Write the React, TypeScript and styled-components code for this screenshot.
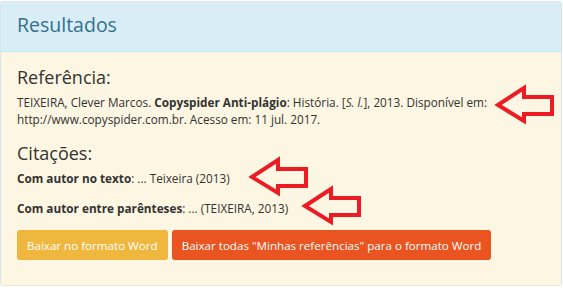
import React from "react";
import styled, { createGlobalStyle } from "styled-components";

const GlobalStyle = createGlobalStyle`
  html, body { margin: 0; padding: 0; background: #ffffff; }
  body {
    font-family: "Open Sans", "Noto Sans", sans-serif;
    color: #333333;
    -webkit-font-smoothing: antialiased;
  }
  * { box-sizing: border-box; }
`;

const Panel = styled.section`
  position: relative;
  margin-top: 1px;
  width: 562px;
  border: 1px solid #d8e6ea;
  border-bottom-color: #f4e4c3;
  border-radius: 3px;
  overflow: hidden;
`;

const Heading = styled.header`
  background: #d9edf7;
  border-bottom: 1px solid #bce8f1;
  color: #31708f;
  padding: 11px 16px 15px;
  font-size: 19.5px;
  line-height: 23px;
  font-weight: 400;
`;

const Body = styled.div`
  background: #fdf6e2;
  padding: 15px 16px 25px;
`;

const SectionTitle = styled.h4`
  margin: 0 0 7px;
  font-size: 18px;
  line-height: 20px;
  font-weight: 400;
  color: #333333;
`;

const RefText = styled.p`
  margin: 0 0 15px;
  font-size: 11.75px;
  line-height: 17px;
  color: #333333;
`;

const CiteLine = styled.p`
  margin: 0 0 13px;
  font-size: 11.75px;
  line-height: 17px;
  color: #333333;
`;

const Actions = styled.div`
  display: flex;
  gap: 4px;
`;

const Button = styled.button<{ $tone: "warning" | "primary" }>`
  height: 30px;
  padding: 0 10px;
  border: none;
  border-radius: 3px;
  font-family: inherit;
  font-size: 11.6px;
  color: #ffffff;
  background: ${(p) => (p.$tone === "warning" ? "#efb73e" : "#e95420")};
  cursor: pointer;
`;

const ArrowMark = styled.svg<{ $x: number; $y: number }>`
  position: absolute;
  left: ${(p) => p.$x}px;
  top: ${(p) => p.$y}px;
  width: 58px;
  height: 37px;
  overflow: visible;
`;

const Arrow = ({ x, y }: { x: number; y: number }) => (
  <ArrowMark $x={x} $y={y} viewBox="0 0 58 37">
    <polygon
      points="2,19 28,2 28,11 56,11 56,28 28,28 28,35"
      fill="none"
      stroke="#ed1c24"
      strokeWidth="4"
      strokeLinejoin="miter"
    />
  </ArrowMark>
);

export default function App() {
  return (
    <>
      <GlobalStyle />
      <Panel>
        <Heading>Resultados</Heading>
        <Body>
          <SectionTitle>Referência:</SectionTitle>
          <RefText>
            TEIXEIRA, Clever Marcos. <b>Copyspider Anti-plágio</b>: História. [<i>S. l.</i>], 2013.
            Disponível em: http://www.copyspider.com.br. Acesso em: 11 jul. 2017.
          </RefText>
          <SectionTitle>Citações:</SectionTitle>
          <CiteLine>
            <b>Com autor no texto</b>: ... Teixeira (2013)
          </CiteLine>
          <CiteLine>
            <b>Com autor entre parênteses</b>: ... (TEIXEIRA, 2013)
          </CiteLine>
          <Actions>
            <Button $tone="warning">Baixar no formato Word</Button>
            <Button $tone="primary">Baixar todas "Minhas referências" para o formato Word</Button>
          </Actions>
        </Body>
        <Arrow x={495} y={84} />
        <Arrow x={249} y={156} />
        <Arrow x={302} y={185} />
      </Panel>
    </>
  );
}
